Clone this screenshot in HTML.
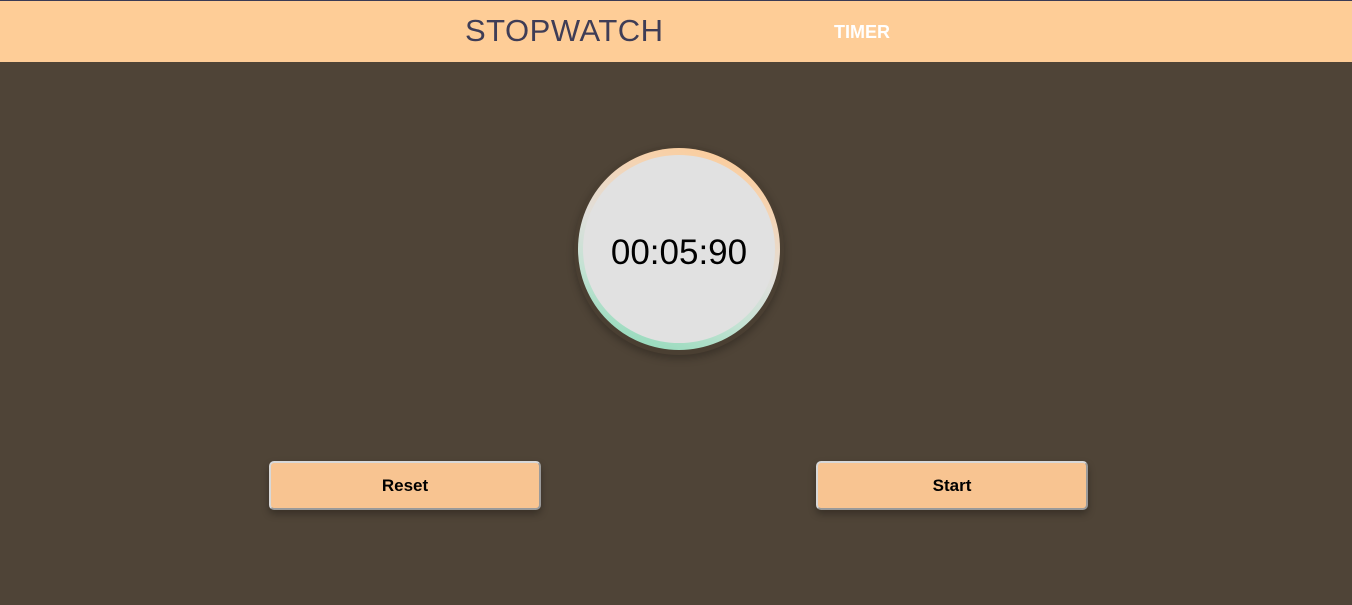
<!DOCTYPE html>
<html><head><style>
html,body{margin:0;padding:0}
body{width:1352px;height:605px;background:#4f4437;font-family:"Liberation Sans",sans-serif;position:relative;overflow:hidden}
.hdr{position:absolute;left:0;top:0;width:1352px;height:62px;background:#fecd97;border-top:1px solid #3a3a55;box-sizing:border-box}
.t1{position:absolute;left:465px;top:12px;font-size:31px;color:#3f3d56;letter-spacing:0.5px}
.t2{position:absolute;left:834px;top:21px;font-size:18px;color:#fff;font-weight:bold}
.outer{position:absolute;left:574px;top:145px;width:210px;height:210px;border-radius:50%;background:#4a3f32;box-shadow:0 4px 8px rgba(0,0,0,.25)}
.ring{position:absolute;left:578px;top:148px;width:202px;height:202px;border-radius:50%;background:linear-gradient(200deg,#ffc98f 0%,#f4d4b4 25%,#e0dfdc 50%,#c3e2d3 70%,#84d8b3 100%)}
.inner{position:absolute;left:583px;top:155px;width:192px;height:188px;border-radius:50%;background:#e1e1e1}
.time{position:absolute;left:578px;top:233px;width:202px;text-align:center;font-size:35px;color:#000}
.btn{position:absolute;top:461px;width:272px;height:49px;box-sizing:border-box;background:#f8c491;border:2px solid #d8d8d8;border-right-color:#9a9a9a;border-bottom-color:#9a9a9a;border-radius:5px;box-shadow:0 4px 8px rgba(0,0,0,.3);text-align:center;line-height:45px;font-size:17px;font-weight:bold;color:#000}
</style></head><body>
<div class="hdr"><div class="t1">STOPWATCH</div><div class="t2">TIMER</div></div>
<div class="outer"></div><div class="ring"></div><div class="inner"></div>
<div class="time">00:05:90</div>
<div class="btn" style="left:269px">Reset</div>
<div class="btn" style="left:816px">Start</div>
</body></html>
